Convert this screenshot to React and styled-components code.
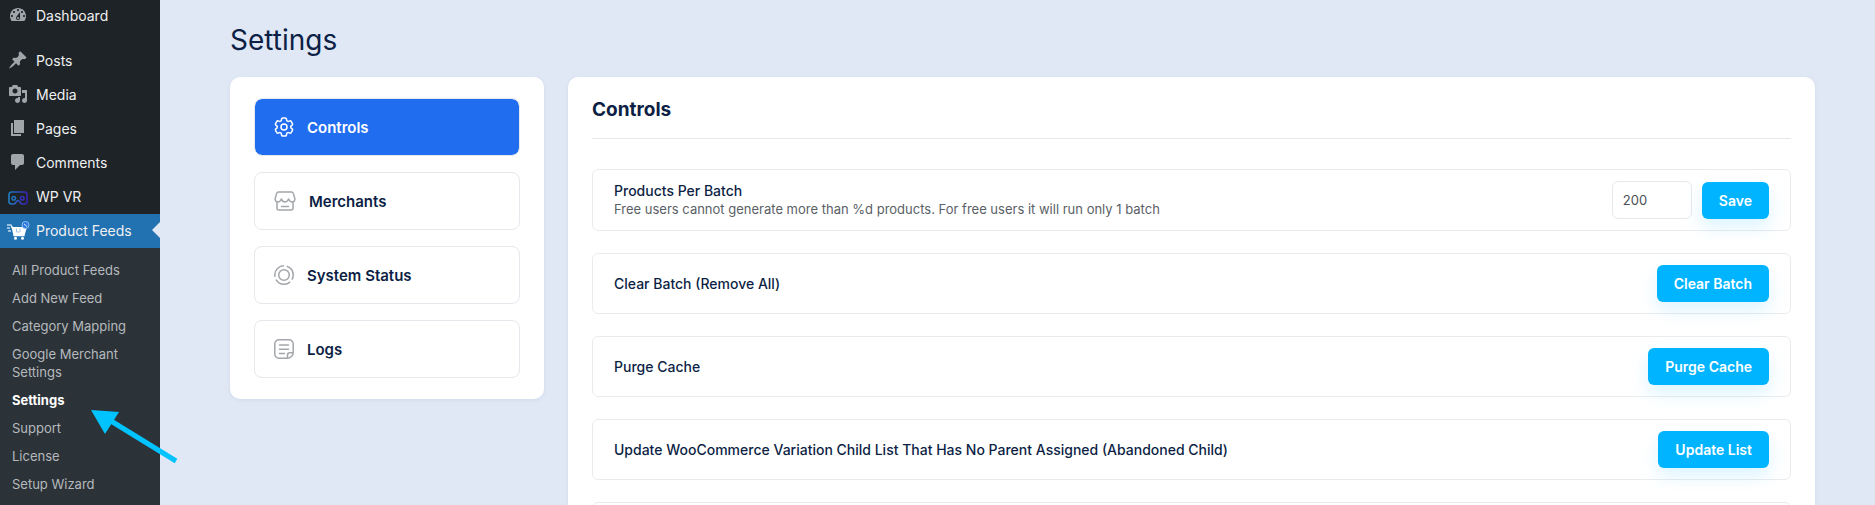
import React, { useState } from "react";
import styled, { createGlobalStyle } from "styled-components";

const GlobalStyle = createGlobalStyle`
  * {
    box-sizing: border-box;
  }
  body {
    margin: 0;
    background: #e1e8f5;
    font-family: Inter, "Liberation Sans", sans-serif;
    color: #0d1f45;
  }
`;

const DashboardIcon = () => (
  <svg width="20" height="20" viewBox="0 0 20 20" fill="currentColor">
    <path d="M3.76 16h12.48c1.1-1.37 1.76-3.11 1.76-5 0-4.42-3.58-8-8-8s-8 3.58-8 8c0 1.89.66 3.63 1.76 5zM10 4c.55 0 1 .45 1 1s-.45 1-1 1-1-.45-1-1 .45-1 1-1zM6 6c.55 0 1 .45 1 1s-.45 1-1 1-1-.45-1-1 .45-1 1-1zm8 0c.55 0 1 .45 1 1s-.45 1-1 1-1-.45-1-1 .45-1 1-1zm-5.37 5.55L12 7v6c0 1.1-.9 2-2 2s-2-.9-2-2c0-.57.24-1.08.63-1.45zM4 10c.55 0 1 .45 1 1s-.45 1-1 1-1-.45-1-1 .45-1 1-1zm12 0c.55 0 1 .45 1 1s-.45 1-1 1-1-.45-1-1 .45-1 1-1zm-5 3c0-.55-.45-1-1-1s-1 .45-1 1 .45 1 1 1 1-.45 1-1z" />
  </svg>
);

const PinIcon = () => (
  <svg width="20" height="20" viewBox="0 0 20 20" fill="currentColor">
    <path d="M10.44 3.02l1.82-1.82 6.36 6.35-1.83 1.82c-1.05-.68-2.48-.57-3.41.36l-.75.75c-.92.93-1.04 2.35-.35 3.41l-1.83 1.82-2.41-2.41-2.8 2.79c-.42.42-3.38 2.71-3.8 2.29s1.86-3.39 2.28-3.81l2.79-2.79L4.1 9.36l1.83-1.82c1.05.69 2.48.57 3.4-.36l.75-.75c.93-.92 1.05-2.35.36-3.41z" />
  </svg>
);

const MediaIcon = () => (
  <svg width="20" height="20" viewBox="0 0 20 20" fill="currentColor">
    <path d="M13 11V4c0-.55-.45-1-1-1h-1.67L9 1H5L3.67 3H2c-.55 0-1 .45-1 1v7c0 .55.45 1 1 1h10c.55 0 1-.45 1-1zM7 4.5c1.38 0 2.5 1.12 2.5 2.5S8.38 9.5 7 9.5 4.5 8.38 4.5 7 5.62 4.5 7 4.5zM14 6h5v10.5c0 1.38-1.12 2.5-2.5 2.5S14 17.88 14 16.5s1.12-2.5 2.5-2.5c.17 0 .34.02.5.05V9h-3V6zm-4 8.05V13h2v3.5c0 1.38-1.12 2.5-2.5 2.5S7 17.88 7 16.5 8.12 14 9.5 14c.17 0 .34.02.5.05z" />
  </svg>
);

const PagesIcon = () => (
  <svg width="20" height="20" viewBox="0 0 20 20" fill="currentColor">
    <path d="M6 15V2h10v13H6zm-1 1h8v2H3V5h2v11z" />
  </svg>
);

const CommentsIcon = () => (
  <svg width="20" height="20" viewBox="0 0 20 20" fill="currentColor">
    <path d="M5 2h9c1.1 0 2 .9 2 2v7c0 1.1-.9 2-2 2h-2l-5 5v-5H5c-1.1 0-2-.9-2-2V4c0-1.1.9-2 2-2z" />
  </svg>
);

const VrIcon = () => (
  <svg width="20" height="20" viewBox="0 -2 20 20" fill="none">
    <defs>
      <linearGradient id="vr" x1="0" x2="1">
        <stop offset="0" stopColor="#1f7fc0" />
        <stop offset="1" stopColor="#3c1fb0" />
      </linearGradient>
    </defs>
    <path
      d="M3.5 4h13A2.5 2.5 0 0 1 19 6.5v7a2.5 2.5 0 0 1-2.5 2.5h-2.200c-.9 0-1.500-.4-2-1.200l-.9-1.400c-.7-1-2.100-1-2.800 0l-.9 1.400c-.5.8-1.100 1.200-2 1.200H3.500A2.500 2.500 0 0 1 1 13.500v-7A2.500 2.500 0 0 1 3.500 4z"
      stroke="url(#vr)"
      strokeWidth="1.6"
    />
    <circle cx="5.8" cy="10.3" r="1.8" stroke="#2173bd" strokeWidth="1.5" />
    <circle cx="14.2" cy="10.3" r="1.8" stroke="#3730b4" strokeWidth="1.5" />
  </svg>
);

const FeedIcon = () => (
  <svg width="24" height="20" viewBox="0 -1 24 20" fill="none">
    <path d="M1 4h4l1 3M1 7h3M2 10h3" stroke="#bcd8f0" strokeWidth="1.3" />
    <path d="M5 4l2.500 10.500h11L21 6H7" fill="#fff" />
    <path d="M7.5 14.5h11" stroke="#fff" strokeWidth="1.5" />
    <circle cx="9.5" cy="17.2" r="1.5" fill="#fff" />
    <circle cx="16.5" cy="17.2" r="1.5" fill="#fff" />
    <path d="M10.500 7.500v3.500h3M14 7.500v3.500" stroke="#9fc3e6" />
    <circle cx="19.500" cy="4" r="3.500" fill="#2a78e0" stroke="#8fc0f5" />
    <path d="M18 3l3 2.500" stroke="#d5e8fb" />
  </svg>
);

const GearIcon = () => (
  <svg width="20" height="20" viewBox="2 2 20 20" fill="none" stroke="currentColor" strokeWidth="1.5">
    <path d="M9.594 3.94c.09-.542.56-.94 1.11-.94h2.593c.55 0 1.02.398 1.11.94l.213 1.281c.063.374.313.686.645.87.074.04.147.083.22.127.325.196.72.257 1.075.124l1.217-.456a1.125 1.125 0 0 1 1.37.49l1.296 2.247a1.125 1.125 0 0 1-.26 1.431l-1.003.827c-.293.241-.438.613-.43.992a7.723 7.723 0 0 1 0 .255c-.008.378.137.75.43.991l1.004.827c.424.35.534.955.26 1.43l-1.298 2.247a1.125 1.125 0 0 1-1.369.491l-1.217-.456c-.355-.133-.75-.072-1.076.124a6.47 6.47 0 0 1-.22.128c-.331.183-.581.495-.644.869l-.213 1.281c-.09.543-.56.94-1.11.94h-2.594c-.55 0-1.019-.398-1.11-.94l-.213-1.281c-.062-.374-.312-.686-.644-.87a6.52 6.52 0 0 1-.22-.127c-.325-.196-.72-.257-1.076-.124l-1.217.456a1.125 1.125 0 0 1-1.369-.49l-1.297-2.247a1.125 1.125 0 0 1 .26-1.431l1.004-.827c.292-.24.437-.613.43-.991a6.932 6.932 0 0 1 0-.255c.007-.38-.138-.751-.43-.992l-1.004-.827a1.125 1.125 0 0 1-.26-1.43l1.297-2.247a1.125 1.125 0 0 1 1.37-.491l1.216.456c.356.133.751.072 1.076-.124.072-.044.146-.086.22-.128.332-.183.582-.495.644-.869l.214-1.280z" />
    <circle cx="12" cy="12" r="3" />
  </svg>
);

const StoreIcon = () => (
  <svg width="22" height="20" viewBox="0 0 22 20" fill="none" stroke="currentColor" strokeWidth="1.5">
    <path
      strokeLinejoin="round"
      d="M4.500 1h13q1.400 0 1.800 1.400L20.800 7.500c.5 2-1 3.500-2.600 3.500s-3-1.500-3.600-3c-.8 1.800-2 3-3.600 3S8 9.800 7.400 8c-.6 1.500-2 3-3.600 3S.7 9.500 1.200 7.500L2.700 2.400Q3.100 1 4.500 1z"
    />
    <path d="M3 11v6q0 2 2 2h12q2 0 2-2v-6M7.500 15.500h7" strokeLinecap="round" />
  </svg>
);

const StatusIcon = () => (
  <svg width="20" height="20" viewBox="0 0 20 20" fill="none" stroke="currentColor" strokeWidth="1.5">
    <circle cx="10" cy="10" r="5.3" />
    <circle cx="10" cy="10" r="9.2" pathLength="60" strokeDasharray="17 3" strokeDashoffset="12" />
  </svg>
);

const LogsIcon = () => (
  <svg width="20" height="20" viewBox="0 0 20 20" fill="none" stroke="currentColor" strokeWidth="1.5">
    <path d="M13.5 19.2H5A4.2 4.2 0 0 1 .8 15V5A4.2 4.2 0 0 1 5 .8h10A4.2 4.2 0 0 1 19.2 5v8.500c0 3-2.700 5.700-5.700 5.700z" />
    <path d="M13.5 19v-3q0-2.300 2.300-2.300h3.200M5.500 6h9M5.500 10.200h9M5.500 14.400h5" strokeLinecap="round" />
  </svg>
);

const menuItems = [
  { label: "Posts", icon: <PinIcon /> },
  { label: "Media", icon: <MediaIcon /> },
  { label: "Pages", icon: <PagesIcon /> },
  { label: "Comments", icon: <CommentsIcon /> },
  { label: "WP VR", icon: <VrIcon /> },
  { label: "Product Feeds", icon: <FeedIcon />, active: true },
];

const subItems = [
  "All Product Feeds",
  "Add New Feed",
  "Category Mapping",
  "Google Merchant Settings",
  "Settings",
  "Support",
  "License",
  "Setup Wizard",
];

const tabs = [
  { label: "Controls", icon: <GearIcon /> },
  { label: "Merchants", icon: <StoreIcon /> },
  { label: "System Status", icon: <StatusIcon /> },
  { label: "Logs", icon: <LogsIcon /> },
];

const actions = [
  { title: "Clear Batch (Remove All)", button: "Clear Batch" },
  { title: "Purge Cache", button: "Purge Cache" },
  {
    title:
      "Update WooCommerce Variation Child List That Has No Parent Assigned (Abandoned Child)",
    button: "Update List",
  },
];

function Sidebar() {
  return (
    <StyledSidebar>
      <MenuLink href="#" $short>
        <MenuIcon>
          <DashboardIcon />
        </MenuIcon>
        Dashboard
      </MenuLink>
      <Separator />
      {menuItems.map((item) => (
        <MenuLink href="#" key={item.label} $active={item.active}>
          <MenuIcon>{item.icon}</MenuIcon>
          {item.label}
        </MenuLink>
      ))}
      <SubMenu>
        {subItems.map((label) => (
          <li key={label}>
            <SubLink href="#" $current={label === "Settings"}>
              {label}
            </SubLink>
          </li>
        ))}
      </SubMenu>
      <Pointer width="88" height="55" viewBox="0 0 88 55">
        <path d="M20 11L85 51" stroke="#00c3ff" strokeWidth="5" />
        <path d="M0 0l28 2-14 22z" fill="#00c3ff" />
      </Pointer>
    </StyledSidebar>
  );
}

function App() {
  const [tab, setTab] = useState("Controls");
  const [batch, setBatch] = useState("200");

  return (
    <>
      <GlobalStyle />
      <Layout>
        <Sidebar />
        <Main>
          <PageTitle>Settings</PageTitle>
          <Columns>
            <TabList>
              {tabs.map(({ label, icon }) => (
                <Tab
                  key={label}
                  type="button"
                  $active={tab === label}
                  onClick={() => setTab(label)}
                >
                  {icon}
                  {label}
                </Tab>
              ))}
            </TabList>
            <Panel>
              <PanelTitle>Controls</PanelTitle>
              <Rows>
                <Row>
                  <div>
                    <RowLabel htmlFor="batch">Products Per Batch</RowLabel>
                    <RowHint>
                      Free users cannot generate more than %d products. For free
                      users it will run only 1 batch
                    </RowHint>
                  </div>
                  <RowActions>
                    <BatchInput
                      id="batch"
                      type="text"
                      value={batch}
                      onChange={(e) => setBatch(e.target.value)}
                    />
                    <Button type="button">Save</Button>
                  </RowActions>
                </Row>
                {actions.map(({ title, button }) => (
                  <Row key={button}>
                    <RowTitle>{title}</RowTitle>
                    <Button type="button">{button}</Button>
                  </Row>
                ))}
                <Row />
              </Rows>
            </Panel>
          </Columns>
        </Main>
      </Layout>
    </>
  );
}

export default App;

const Layout = styled.div`
  display: flex;
  height: 100vh;
  overflow: hidden;
`;

const StyledSidebar = styled.nav`
  position: relative;
  flex: 0 0 160px;
  background: #1d2327;
`;

const MenuLink = styled.a`
  position: relative;
  display: flex;
  align-items: center;
  height: ${(props) => (props.$short ? "32px" : "34px")};
  padding-bottom: 2px;
  font-size: 14px;
  color: #f0f0f1;
  text-decoration: none;
  background: ${(props) => (props.$active ? "#2271b1" : "transparent")};

  &::after {
    content: "";
    display: ${(props) => (props.$active ? "block" : "none")};
    position: absolute;
    right: 0;
    border: 8px solid transparent;
    border-right-color: #e1e8f5;
  }
`;

const MenuIcon = styled.span`
  display: flex;
  justify-content: center;
  width: 36px;
  color: #a0a5aa;
`;

const Separator = styled.div`
  height: 12px;
`;

const SubMenu = styled.ul`
  margin: 0;
  padding: 8px 0;
  list-style: none;
  background: #2c3338;
`;

const SubLink = styled.a`
  display: block;
  padding: 5px 12px;
  font-size: 13px;
  line-height: 18px;
  font-weight: ${(props) => (props.$current ? 700 : 400)};
  color: ${(props) => (props.$current ? "#fff" : "#b5b9bd")};
  text-decoration: none;
`;

/* arrow drawn over the menu, pointing at the current entry */
const Pointer = styled.svg`
  position: absolute;
  left: 91px;
  top: 410px;
  z-index: 1;
`;

const Main = styled.main`
  flex: 1;
  min-width: 0;
  padding: 20px 60px 0 70px;
`;

const PageTitle = styled.h1`
  margin: 0 0 17px;
  font-size: 28px;
  line-height: 40px;
  font-weight: 400;
`;

const Columns = styled.div`
  display: flex;
  align-items: flex-start;
  gap: 24px;
`;

const Card = styled.section`
  background: #fff;
  border-radius: 10px;
  box-shadow: 0 1px 4px rgba(30, 60, 120, 0.08);
`;

const TabList = styled(Card)`
  display: flex;
  flex-direction: column;
  gap: 16px;
  flex: 0 0 314px;
  padding: 21px 24px;
`;

const Tab = styled.button`
  display: flex;
  align-items: center;
  gap: 13px;
  height: 58px;
  padding: 0 19px;
  border: 1px solid #e5e8ec;
  border-radius: 8px;
  background: ${(props) => (props.$active ? "#216df0" : "#fff")};
  background-clip: padding-box;
  color: ${(props) => (props.$active ? "#fff" : "#0d1f45")};
  font-family: inherit;
  font-size: 15px;
  font-weight: 600;
  cursor: pointer;

  svg {
    color: ${(props) => (props.$active ? "#fff" : "#a3a6aa")};
  }
`;

const Panel = styled(Card)`
  flex: 1;
  min-width: 0;
  padding: 18px 24px 24px;
`;

const PanelTitle = styled.h2`
  margin: 0 0 30px;
  padding-bottom: 13px;
  border-bottom: 1px solid #e5e8ec;
  font-size: 19px;
  line-height: 30px;
  font-weight: 700;
`;

const Rows = styled.div`
  display: flex;
  flex-direction: column;
  gap: 22px;
`;

const Row = styled.div`
  display: flex;
  align-items: center;
  justify-content: space-between;
  min-height: 61px;
  padding: 11px 21px;
  border: 1px solid #e9ecef;
  border-radius: 6px;
`;

const RowTitle = styled.span`
  font-size: 14px;
  line-height: 18px;
  font-weight: 500;
`;

const RowLabel = styled(RowTitle).attrs({ as: "label" })`
  display: block;
`;

const RowHint = styled.p`
  margin: 0;
  font-size: 13px;
  line-height: 18px;
  color: #5a5f66;
`;

const RowActions = styled.div`
  display: flex;
  align-items: flex-end;
  gap: 10px;
`;

const BatchInput = styled.input`
  width: 80px;
  height: 38px;
  padding: 0 10px;
  border: 1px solid #e5e8ec;
  border-radius: 6px;
  background: #fff;
  color: #4a4f55;
  font-family: inherit;
  font-size: 13px;
`;

const Button = styled.button`
  height: 37px;
  padding: 0 17px;
  border: none;
  border-radius: 6px;
  background: #00b4ff;
  box-shadow: 0 8px 18px rgba(0, 180, 255, 0.14);
  color: #fff;
  font-family: inherit;
  font-size: 14px;
  font-weight: 600;
  cursor: pointer;
`;
